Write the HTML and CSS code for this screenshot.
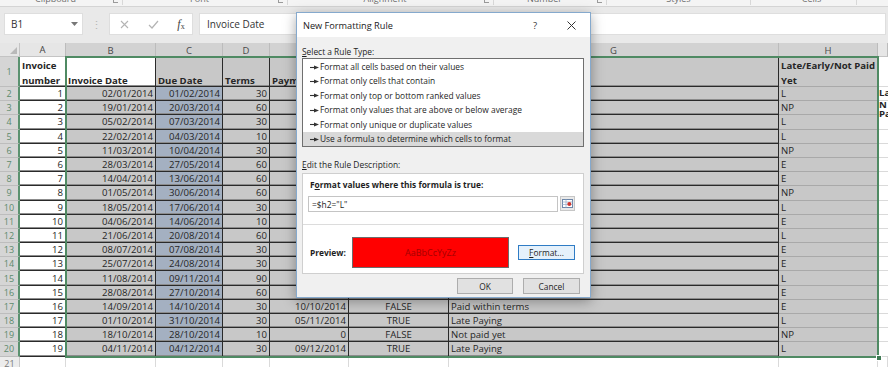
FILE: index.html
```html
<!DOCTYPE html>
<html>
<head>
<meta charset="utf-8">
<link rel="stylesheet" href="styles.css">
</head>
<body>
<svg class="defs" width="0" height="0"><symbol id="arr" viewBox="0 0 9 5"><path d="M0 2.5H5" stroke="#333" stroke-width="1.1"/><path d="M4 0.4L9 2.5L4 4.6Z" fill="#333"/></symbol></svg>

<div class="ribbon">
  <div class="grp w1"><span class="glabel">Clipboard</span><i class="launch"></i></div>
  <div class="grp w2"><span class="glabel">Font</span><i class="launch"></i></div>
  <div class="grp w3"><span class="glabel">Alignment</span><i class="launch"></i></div>
  <div class="grp w4"><span class="glabel">Number</span><i class="launch"></i></div>
  <div class="grp w5"><span class="glabel">Styles</span></div>
  <div class="grp w6"><span class="glabel">Cells</span></div>
  <div class="grp w7"></div>
</div>

<div class="fbar">
  <div class="namebox"><span>B1</span><svg class="dd" width="7" height="4" viewBox="0 0 7 4"><path d="M0 0H7L3.5 4Z" fill="#777"/></svg></div>
  <div class="dots">⋮</div>
  <div class="fxbox">
    <span class="fxi"><svg width="9" height="9" viewBox="0 0 9 9"><path d="M1 1L8 8M8 1L1 8" stroke="#b4b4b4" stroke-width="1.1"/></svg></span>
    <span class="fxi"><svg width="11" height="9" viewBox="0 0 11 9"><path d="M1 5L4 8L10 1" stroke="#b4b4b4" stroke-width="1.2" fill="none"/></svg></span>
    <span class="fxi fx"><i>f</i><small>x</small></span>
  </div>
  <div class="formula">Invoice Date</div>
</div>

<div class="sheet">
  <div class="cols">
    <span class="corner"><svg width="7" height="7" viewBox="0 0 7 7"><path d="M7 0V7H0Z" fill="#b9b9b9"/></svg></span>
    <span class="ch n">A</span><span class="ch">B</span><span class="ch">C</span><span class="ch">D</span><span class="ch">E</span><span class="ch">F</span><span class="ch">G</span><span class="ch">H</span><span class="ch n"></span>
  </div>
  <div class="row r1">
    <span class="rh">1</span><span class="w hd"><span class="t">Invoice<br>number</span></span><span class="wb hd"><span class="t">Invoice Date</span></span><span class="gy hd"><span class="t">Due Date</span></span><span class="gy hd"><span class="t">Terms</span></span><span class="gy hd"><span class="t">Payment Date</span></span><span class="gy hd"></span><span class="gy hd"></span><span class="hh hd"><span class="t">Late/Early/Not Paid<br>Yet</span></span><span class="ii"></span>
  </div>
  <div class="row"><span class="rh">2</span><span class="w r">1</span><span class="gy r">02/01/2014</span><span class="bl r">01/02/2014</span><span class="gy r">30</span><span class="gy"></span><span class="gy"></span><span class="gy"></span><span class="hh">L</span><span class="ii ix"><span class="t1">La</span></span></div>
  <div class="row"><span class="rh">3</span><span class="w r">2</span><span class="gy r">19/01/2014</span><span class="bl r">20/03/2014</span><span class="gy r">60</span><span class="gy"></span><span class="gy"></span><span class="gy"></span><span class="hh">NP</span><span class="ii ix"><span class="t2">N<br>Pa</span></span></div>
  <div class="row"><span class="rh">4</span><span class="w r">3</span><span class="gy r">05/02/2014</span><span class="bl r">07/03/2014</span><span class="gy r">30</span><span class="gy"></span><span class="gy"></span><span class="gy"></span><span class="hh">L</span><span class="ii"></span></div>
  <div class="row"><span class="rh">5</span><span class="w r">4</span><span class="gy r">22/02/2014</span><span class="bl r">04/03/2014</span><span class="gy r">10</span><span class="gy"></span><span class="gy"></span><span class="gy"></span><span class="hh">L</span><span class="ii"></span></div>
  <div class="row"><span class="rh">6</span><span class="w r">5</span><span class="gy r">11/03/2014</span><span class="bl r">10/04/2014</span><span class="gy r">30</span><span class="gy"></span><span class="gy"></span><span class="gy"></span><span class="hh">NP</span><span class="ii"></span></div>
  <div class="row"><span class="rh">7</span><span class="w r">6</span><span class="gy r">28/03/2014</span><span class="bl r">27/05/2014</span><span class="gy r">60</span><span class="gy"></span><span class="gy"></span><span class="gy"></span><span class="hh">E</span><span class="ii"></span></div>
  <div class="row"><span class="rh">8</span><span class="w r">7</span><span class="gy r">14/04/2014</span><span class="bl r">13/06/2014</span><span class="gy r">60</span><span class="gy"></span><span class="gy"></span><span class="gy"></span><span class="hh">E</span><span class="ii"></span></div>
  <div class="row"><span class="rh">9</span><span class="w r">8</span><span class="gy r">01/05/2014</span><span class="bl r">30/06/2014</span><span class="gy r">60</span><span class="gy"></span><span class="gy"></span><span class="gy"></span><span class="hh">NP</span><span class="ii"></span></div>
  <div class="row"><span class="rh">10</span><span class="w r">9</span><span class="gy r">18/05/2014</span><span class="bl r">17/06/2014</span><span class="gy r">30</span><span class="gy"></span><span class="gy"></span><span class="gy"></span><span class="hh">L</span><span class="ii"></span></div>
  <div class="row"><span class="rh">11</span><span class="w r">10</span><span class="gy r">04/06/2014</span><span class="bl r">14/06/2014</span><span class="gy r">10</span><span class="gy"></span><span class="gy"></span><span class="gy"></span><span class="hh">E</span><span class="ii"></span></div>
  <div class="row"><span class="rh">12</span><span class="w r">11</span><span class="gy r">21/06/2014</span><span class="bl r">20/08/2014</span><span class="gy r">60</span><span class="gy"></span><span class="gy"></span><span class="gy"></span><span class="hh">L</span><span class="ii"></span></div>
  <div class="row"><span class="rh">13</span><span class="w r">12</span><span class="gy r">08/07/2014</span><span class="bl r">07/08/2014</span><span class="gy r">30</span><span class="gy"></span><span class="gy"></span><span class="gy"></span><span class="hh">E</span><span class="ii"></span></div>
  <div class="row"><span class="rh">14</span><span class="w r">13</span><span class="gy r">25/07/2014</span><span class="bl r">24/08/2014</span><span class="gy r">30</span><span class="gy"></span><span class="gy"></span><span class="gy"></span><span class="hh">E</span><span class="ii"></span></div>
  <div class="row"><span class="rh">15</span><span class="w r">14</span><span class="gy r">11/08/2014</span><span class="bl r">09/11/2014</span><span class="gy r">90</span><span class="gy"></span><span class="gy"></span><span class="gy"></span><span class="hh">L</span><span class="ii"></span></div>
  <div class="row"><span class="rh">16</span><span class="w r">15</span><span class="gy r">28/08/2014</span><span class="bl r">27/10/2014</span><span class="gy r">60</span><span class="gy"></span><span class="gy"></span><span class="gy"></span><span class="hh">E</span><span class="ii"></span></div>
  <div class="row"><span class="rh">17</span><span class="w r">16</span><span class="gy r">14/09/2014</span><span class="bl r">14/10/2014</span><span class="gy r">30</span><span class="gy r">10/10/2014</span><span class="gy c">FALSE</span><span class="gy l">Paid within terms</span><span class="hh">E</span><span class="ii"></span></div>
  <div class="row"><span class="rh">18</span><span class="w r">17</span><span class="gy r">01/10/2014</span><span class="bl r">31/10/2014</span><span class="gy r">30</span><span class="gy r">05/11/2014</span><span class="gy c">TRUE</span><span class="gy l">Late Paying</span><span class="hh">L</span><span class="ii"></span></div>
  <div class="row"><span class="rh">19</span><span class="w r">18</span><span class="gy r">18/10/2014</span><span class="bl r">28/10/2014</span><span class="gy r">10</span><span class="gy r">0</span><span class="gy c">FALSE</span><span class="gy l">Not paid yet</span><span class="hh">NP</span><span class="ii"></span></div>
  <div class="row"><span class="rh">20</span><span class="w r">19</span><span class="gy r">04/11/2014</span><span class="bl r">04/12/2014</span><span class="gy r">30</span><span class="gy r">09/12/2014</span><span class="gy c">TRUE</span><span class="gy l">Late Paying</span><span class="hh">L</span><span class="ii"></span></div>
  <div class="row r21"><span class="rh n">21</span><span class="e"></span><span class="e"></span><span class="e"></span><span class="e"></span><span class="e"></span><span class="e"></span><span class="e"></span><span class="e"></span><span class="e"></span></div>
</div>

<div class="sel"><i class="handle"></i></div>

<div class="dlg">
  <div class="dtitle">
    <span class="ttl">New Formatting Rule</span>
    <span class="q">?</span>
    <span class="xx"><svg width="9" height="9" viewBox="0 0 9 9"><path d="M0.5 0.5L8.5 8.5M8.5 0.5L0.5 8.5" stroke="#333" stroke-width="1"/></svg></span>
  </div>
  <div class="dbody">
    <div class="lbl"><u>S</u>elect a Rule Type:</div>
    <div class="list">
      <div class="item"><svg class="ia" width="9" height="5"><use href="#arr"/></svg>Format all cells based on their values</div>
      <div class="item"><svg class="ia" width="9" height="5"><use href="#arr"/></svg>Format only cells that contain</div>
      <div class="item"><svg class="ia" width="9" height="5"><use href="#arr"/></svg>Format only top or bottom ranked values</div>
      <div class="item"><svg class="ia" width="9" height="5"><use href="#arr"/></svg>Format only values that are above or below average</div>
      <div class="item"><svg class="ia" width="9" height="5"><use href="#arr"/></svg>Format only unique or duplicate values</div>
      <div class="item on"><svg class="ia" width="9" height="5"><use href="#arr"/></svg>Use a formula to determine which cells to format</div>
    </div>
    <div class="lbl l2"><u>E</u>dit the Rule Description:</div>
    <div class="panel">
      <div class="plbl">F<u>o</u>rmat values where this formula is true:</div>
      <div class="inrow">
        <div class="input">=$h2="L"</div>
        <div class="refbtn"><svg width="13" height="13" viewBox="0 0 13 13"><rect x="1.5" y="2.5" width="10" height="8" fill="#fff" stroke="#6d86a8"/><path d="M1.5 5H11.5M1.5 7.5H11.5M5 2.5V10.5" stroke="#9fb2cc" stroke-width="0.8"/><circle cx="8.3" cy="7" r="2" fill="#d0342c"/></svg></div>
      </div>
      <div class="sep"></div>
      <div class="prow">
        <span class="pl">Preview:</span>
        <div class="pbox">AaBbCcYyZz</div>
        <div class="fbtn"><u>F</u>ormat...</div>
      </div>
    </div>
    <div class="btns">
      <div class="btn">OK</div>
      <div class="btn">Cancel</div>
    </div>
  </div>
</div>
</body>
</html>
```
FILE: styles.css
```css
* { box-sizing: border-box; margin: 0; padding: 0; }
html, body { width: 888px; height: 367px; overflow: hidden; }
body { position: relative; background: #fff; font-family: "Open Sans", "Noto Sans", sans-serif; color: #222; }
.defs { display: block; width: 0; height: 0; }

/* ribbon strip */
.ribbon { height: 7px; background: #f4f4f4; border-bottom: 1px solid #d4d4d4; display: flex; overflow: hidden; }
.grp { display: flex; border-right: 1px solid #d8d8d8; height: 5px; }
.glabel { flex: 1; text-align: center; font-size: 9px; line-height: 10px; margin-top: -6px; color: #6e6e6e; white-space: nowrap; }
.launch { width: 5px; height: 3px; border-left: 1px solid #9a9a9a; border-bottom: 1px solid #9a9a9a; margin: 0 4px 0 2px; }
.w1 { width: 123px; }
.w2 { width: 165px; }
.w3 { width: 206px; }
.w4 { width: 113px; }
.w5 { width: 144px; }
.w6 { width: 106px; padding-left: 16px; }
.w7 { flex: 1; border-right: none; }

/* formula bar */
.fbar { height: 36px; background: #e9e9e9; display: flex; align-items: flex-start; padding: 6px 2px 0 4px; }
.namebox { width: 79px; height: 22px; background: #fff; border: 1px solid #dedede; display: flex; align-items: center; padding: 0 4px 0 6px; font-size: 10px; color: #333; }
.namebox .dd { margin-left: auto; }
.dots { width: 26px; height: 22px; display: flex; align-items: center; justify-content: center; color: #b5b5b5; font-size: 11px; }
.fxbox { width: 84px; height: 22px; background: #fff; border: 1px solid #dedede; display: flex; align-items: center; padding-left: 4px; }
.fxi { width: 20px; display: flex; justify-content: center; align-items: center; }
.fxi + .fxi { margin-left: 9px; }
.fxi.fx { margin-left: 8px; font-family: "Liberation Serif", serif; color: #444; font-size: 12px; }
.fx small { font-size: 8px; font-style: normal; margin-top: 4px; }
.formula { flex: 1; margin-left: 6px; height: 22px; background: #fff; border: 1px solid #dedede; display: flex; align-items: center; padding-left: 7px; font-size: 10px; color: #333; }

/* sheet */
.cols, .row { display: grid; grid-template-columns: 20px 46px 90px 67px 47px 79px 100px 330px 99px 1fr; grid-template-rows: 100%; }
.cols { height: 14px; }
.corner { background: #e6e6e6; border-right: 1px solid #c4c4c4; border-bottom: 1px solid #c4c4c4; display: flex; align-items: flex-end; justify-content: flex-end; padding: 0 2px 2px 0; }
.ch { background: #d2d2d2; border-right: 1px solid #bcbcbc; display: flex; align-items: center; justify-content: center; font-size: 9.5px; color: #4a4a4a; }
.ch.n { background: #e6e6e6; border-bottom: 1px solid #c4c4c4; color: #444; }

.row { height: 14.2px; }
.r1 { height: 30px; }
.row > span { display: flex; align-items: center; overflow: hidden; white-space: nowrap; font-size: 9.6px; line-height: 13px; color: #262626; min-height: 0; }
.rh { justify-content: center; background: #d5d5d5; border-bottom: 1px solid #bdbdbd; border-right: 2px solid #5b9270; font-size: 9px !important; color: #5d8a6c !important; }
.rh.n { background: #ececec; border-right: 1px solid #c8c8c8; color: #7a7a7a !important; }
.w, .wb, .gy, .bl { border-right: 1px solid #2a2a2a; border-bottom: 1px solid #2a2a2a; box-shadow: inset 0 -1px 0 #8c8c8c; }
.w, .wb { background: #fff; }
.gy { background: #c8c8c8; }
.bl { background: #a4b0c1; }
.hh { background: #c8c8c8; border-bottom: 1px solid #a9a9a9; padding-left: 2px; }
.ii { background: transparent; border-bottom: 1px solid #dadada; padding-left: 1px; font-weight: 700; }
.row > .ix { overflow: visible; align-items: flex-start; }
.t1 { margin-top: -1px; }
.t2 { margin-top: -1px; line-height: 9px; }
.e { border-right: 1px solid #dadada; }
.r { justify-content: flex-end; padding-right: 2px; }
.c { justify-content: center; }
.l { padding-left: 2px; }
.row > .hd { align-items: flex-end; white-space: normal; font-weight: 700; line-height: 15px; padding: 0 2px; overflow: visible; }
.hd .t { margin-bottom: -2px; }

/* selection */
.sel { position: absolute; left: 65px; top: 56px; width: 814px; height: 302px; border: 2px solid #4f8a63; pointer-events: none; }
.handle { position: absolute; right: -5px; bottom: -5px; width: 6px; height: 6px; background: #3f7a54; border: 1px solid #fff; }

/* dialog */
.dlg { position: absolute; left: 296px; top: 12px; width: 295px; height: 286px; background: #f0f0f0; border: 1px solid #85a9cd; box-shadow: 0 3px 12px rgba(0,0,0,0.35); font-size: 8.4px; color: #1e1e1e; display: flex; flex-direction: column; }
.dtitle { height: 24px; background: #fff; display: flex; align-items: center; padding-left: 6px; }
.ttl { font-size: 9.2px; color: #222; flex: 1; }
.q { width: 10px; text-align: center; font-size: 9.5px; color: #333; margin-right: 26px; }
.xx { width: 10px; display: flex; justify-content: center; margin-right: 14px; }
.dbody { padding: 0 6px 3px 5px; display: flex; flex-direction: column; }
.lbl { height: 12px; line-height: 12px; margin-top: 9px; }
.l2 { margin-top: 12px; }
.list { height: 89px; background: #fff; border: 1px solid #6f6f6f; padding-top: 1px; }
.item { height: 14.4px; line-height: 14.4px; display: flex; align-items: center; padding-left: 7px; white-space: nowrap; }
.item.on { background: #d9d9d9; }
.ia { margin-right: 1px; flex: none; }
.panel { margin-top: 2px; height: 101px; background: #fff; border: 1px solid #cfcfcf; padding: 5px 0 0 0; }
.plbl { height: 12px; line-height: 12px; font-weight: 700; padding-left: 7px; }
.inrow { margin-top: 5px; display: flex; padding-left: 5px; }
.input { width: 250px; height: 16px; border: 1px solid #c4c4c4; display: flex; align-items: center; padding-left: 3px; }
.refbtn { width: 15px; height: 15px; margin-left: 2px; border: 1px solid #c6c6c6; background: #e9e9e9; display: flex; align-items: center; justify-content: center; }
.sep { margin-top: 12px; height: 1px; background: #dcdcdc; }
.prow { margin-top: 12px; display: flex; align-items: center; padding-left: 7px; }
.pl { width: 42px; font-weight: 700; }
.pbox { width: 157px; height: 31px; border: 1px solid #6c6c6c; background: #ff0000; display: flex; align-items: center; justify-content: center; color: #a40000; font-size: 9px; }
.fbtn { margin-left: 9px; width: 57px; height: 15px; border: 1px solid #2f7cc5; background: #e5f1fb; display: flex; align-items: center; justify-content: center; }
.btns { margin-top: 4px; display: flex; justify-content: flex-end; padding-right: 4px; }
.btn { width: 56px; height: 16px; background: #e1e1e1; border: 1px solid #adadad; display: flex; align-items: center; justify-content: center; }
.btn + .btn { margin-left: 10px; width: 57px; }
```
